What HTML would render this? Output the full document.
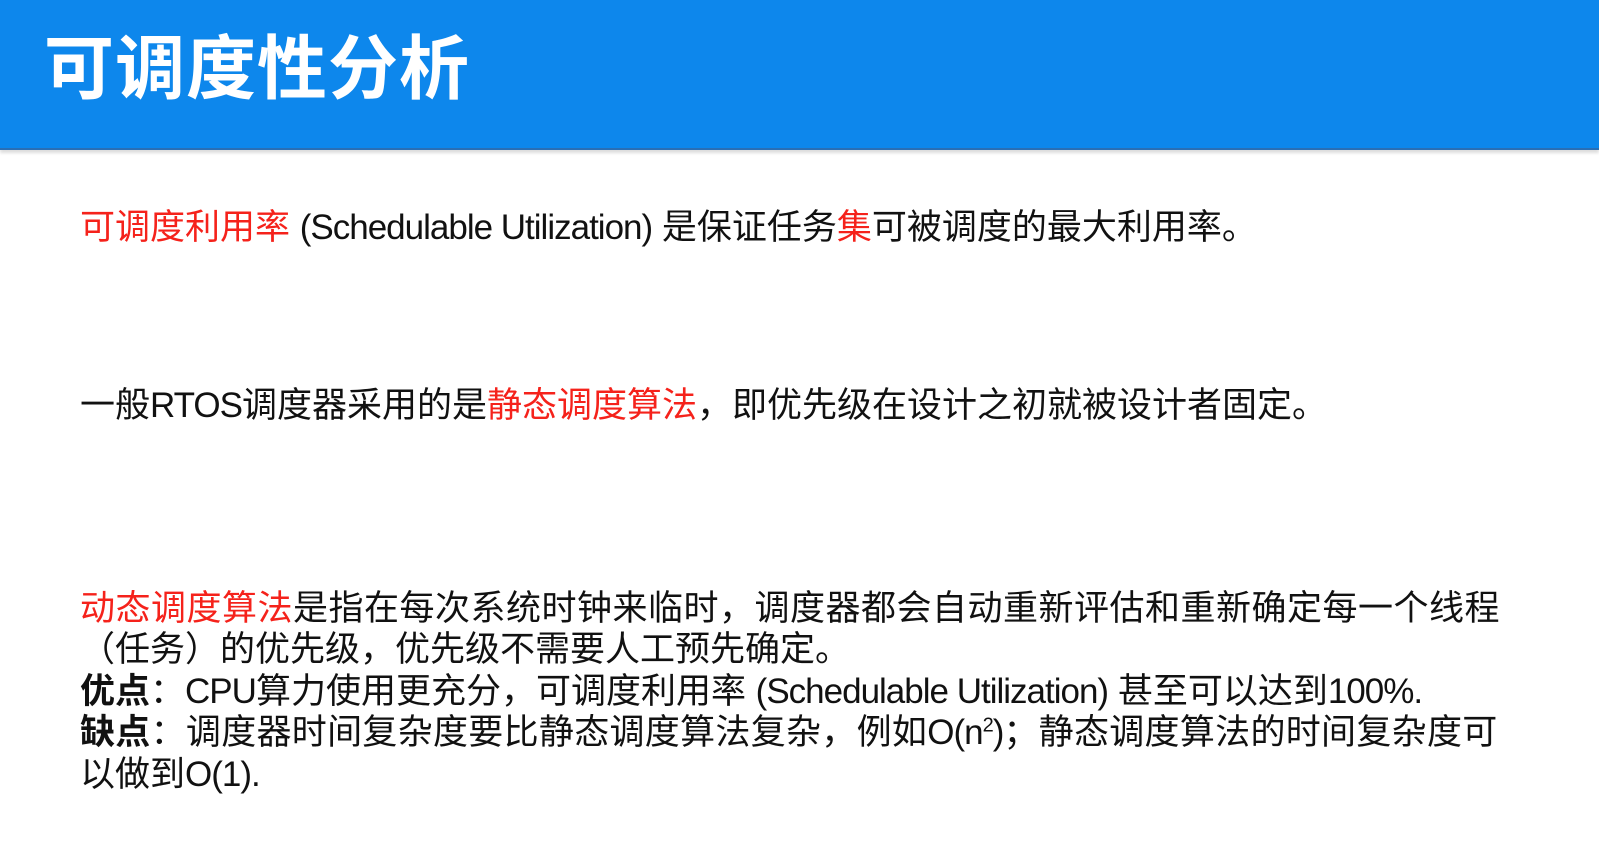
<!DOCTYPE html>
<html><head><meta charset="utf-8"><style>
body{margin:0;width:1599px;height:849px;background:#fff;overflow:hidden;position:relative;font-family:"Liberation Sans","Noto Sans CJK SC",sans-serif;}
.hd{position:absolute;left:0;top:0;width:1599px;height:148px;background:#0d87ec;border-bottom:2px solid #2a6fb5;box-shadow:0 3px 3px #ddd;}
.t{position:absolute;left:44px;top:24px;font-size:70px;font-weight:bold;color:#fff;line-height:90px;letter-spacing:1px;}
.l{position:absolute;left:80px;font-size:35px;line-height:42px;color:#111;white-space:nowrap;}
.r{color:#f5221b}
.e{letter-spacing:-1px}
b{font-weight:bold}
</style></head><body>
<div class="hd"><div class="t">可调度性分析</div></div>
<div class="l" style="top:207px"><span class="r">可调度利用率</span> <span class="e">(Schedulable Utilization)</span> 是保证任务<span class="r">集</span>可被调度的最大利用率。</div>
<div class="l" style="top:385px">一般<span class="e">RTOS</span>调度器采用的是<span class="r">静态调度算法</span>，即优先级在设计之初就被设计者固定。</div>
<div class="l" style="top:588px;letter-spacing:0.5px"><span class="r">动态调度算法</span>是指在每次系统时钟来临时，调度器都会自动重新评估和重新确定每一个线程</div>
<div class="l" style="top:629px;left:80px">（任务）的优先级，优先级不需要人工预先确定。</div>
<div class="l" style="top:671px"><b>优点</b>：<span class="e">CPU</span>算力使用更充分，可调度利用率 <span class="e">(Schedulable Utilization)</span> 甚至可以达到<span class="e">100%.</span></div>
<div class="l" style="top:712px;letter-spacing:0.3px"><b>缺点</b>：调度器时间复杂度要比静态调度算法复杂，例如<span class="e">O(n<sup style="font-size:20px;line-height:0">2</sup>)</span>；静态调度算法的时间复杂度可</div>
<div class="l" style="top:754px">以做到<span class="e">O(1).</span></div>
</body></html>
